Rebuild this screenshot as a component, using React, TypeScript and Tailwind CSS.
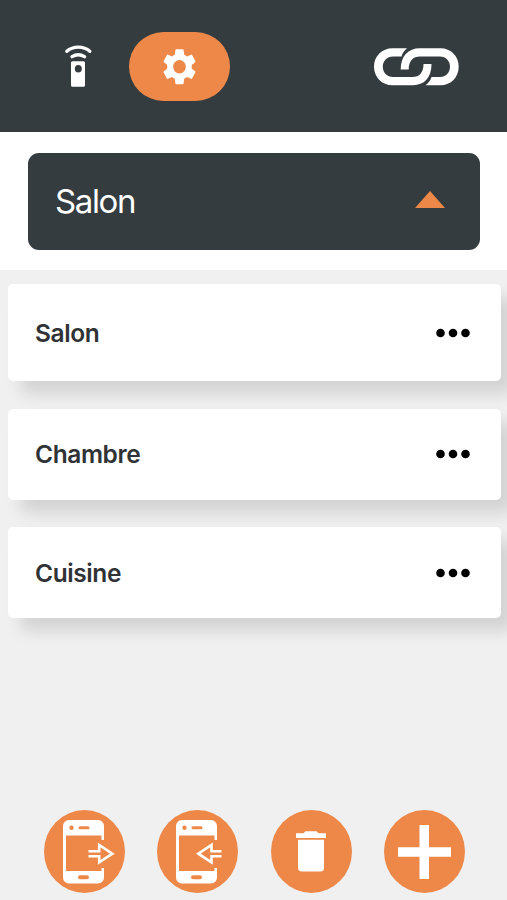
import { useState } from 'react'

const rooms = [
  { name: 'Salon', height: 'h-[97px]' },
  { name: 'Chambre', height: 'h-[91px]' },
  { name: 'Cuisine', height: 'h-[91px]' },
]

function RemoteIcon() {
  return (
    <svg width="30" height="44" viewBox="0 0 30 44" fill="none">
      <path
        fill="#fff"
        fillRule="evenodd"
        d="M9.5 17.3h11a1.500 1.500 0 0 1 1.500 1.500v22.500a1.500 1.500 0 0 1-1.500 1.500h-11a1.500 1.500 0 0 1-1.500-1.500V18.800a1.500 1.500 0 0 1 1.500-1.500zM15.300 21a3.500 3.800 0 1 0 0 7.600a3.500 3.800 0 1 0 0-7.600z"
      />
      <path d="M9 12.700Q15.300 8.800 21.600 12.700" stroke="#fff" strokeWidth="3.300" strokeLinecap="round" />
      <path d="M3.800 7.300C10 1.800 20.600 1.800 26.800 7.300" stroke="#fff" strokeWidth="3.300" strokeLinecap="round" />
    </svg>
  )
}

function GearIcon() {
  return (
    <svg width="41" height="43.500" viewBox="0 0 24 24" preserveAspectRatio="none" fill="#fff">
      <path d="M19.14 12.94c.04-.3.06-.61.06-.94 0-.32-.02-.64-.07-.94l2.03-1.58a.49.49 0 0 0 .12-.61l-1.92-3.32a.488.488 0 0 0-.59-.22l-2.39.96c-.5-.38-1.03-.7-1.62-.94l-.36-2.54a.484.484 0 0 0-.48-.41h-3.84c-.24 0-.43.17-.47.41l-.36 2.54c-.59.24-1.13.57-1.62.94l-2.39-.96c-.22-.08-.47 0-.59.22L2.74 8.87c-.12.21-.08.47.12.61l2.03 1.58c-.05.3-.09.63-.09.94s.02.64.07.94l-2.03 1.58a.49.49 0 0 0-.12.61l1.92 3.32c.12.22.37.29.59.22l2.39-.96c.5.38 1.03.7 1.62.94l.36 2.54c.05.24.24.41.48.41h3.84c.24 0 .44-.17.47-.41l.36-2.54c.59-.24 1.13-.56 1.62-.94l2.39.96c.22.08.47 0 .59-.22l1.92-3.32c.12-.22.07-.47-.12-.61l-2.01-1.58zM12 15.7c-2.040 0-3.700-1.660-3.700-3.700s1.660-3.700 3.700-3.700 3.700 1.660 3.700 3.700-1.660 3.700-3.700 3.700z" />
    </svg>
  )
}

function LinkIcon() {
  return (
    <svg width="85" height="38" viewBox="0 0 85 38" fill="#fff">
      <path d="M33 .300H18.500C8 .300 0 8.200 0 18.700s8 18.500 18.500 18.500H39C50 37.200 57.500 30 57.500 16H49.500C49.500 24.500 45.500 29 38.500 29H19C13 29 8.800 24.500 8.800 18.700S13 8.500 19 8.500H27.500C28.500 5 30.500 2.500 33 .300z" />
      <path d="M51.500 37.200H66.500C77 37.200 84.700 29.200 84.700 18.700S77 .300 66.500 .300H45.500C34.500 .300 26.700 8 26.700 21.500H34.700C34.700 13 39 8.500 46 8.500H66C72 8.500 76 13 76 18.700S72 29 66 29H57.500C56.500 32.500 54.500 35 51.500 37.200z" />
    </svg>
  )
}

function PhoneIcon({ incoming = false }: { incoming?: boolean }) {
  return (
    <svg width="52" height="64" viewBox="0 0 52 64" fill="none">
      <path
        fill="#fff"
        fillRule="evenodd"
        d="M6 0h29a6 6 0 0 1 6 6v14h-2.500V15.500H3V51H38.500V48h2.500V57.500a6 6 0 0 1-6 6H6a6 6 0 0 1-6-6V6a6 6 0 0 1 6-6zM8.500 5.500a2.200 2.200 0 1 0 0 4.400a2.200 2.200 0 1 0 0-4.400zM17 6.200h8a1.500 1.500 0 0 1 0 3H17a1.500 1.500 0 0 1 0-3zM17 55.200h7a2 2 0 0 1 0 4H17a2 2 0 0 1 0-4z"
      />
      {incoming ? (
        <path d="M45.500 31.200H35.500V25L22.300 33.700L35.500 42.400V36.200H45.500" stroke="#fff" strokeWidth="2.600" />
      ) : (
        <path d="M25.500 31.200H36.200V25L49.300 33.700L36.200 42.400V36.200H25.500" stroke="#fff" strokeWidth="2.600" />
      )}
    </svg>
  )
}

function TrashIcon() {
  return (
    <svg width="30" height="41" viewBox="0 0 30 41" fill="#fff">
      <path d="M0 2.300H7.500L9.500 .2H20.500L22.500 2.300H30V7H0z" />
      <path d="M2 8.700H28V37a3.500 3.500 0 0 1-3.500 3.500H6A4 4 0 0 1 2 36.500z" />
    </svg>
  )
}

function PlusIcon() {
  return (
    <svg width="53" height="54" viewBox="0 0 53 54" fill="#fff">
      <path d="M21.500 0h9.500v22.300h22v9.400H31V54h-9.500V31.700H0v-9.400h21.500z" />
    </svg>
  )
}

export default function App() {
  const [selected, setSelected] = useState('Salon')
  const actionClass = 'flex h-[83px] w-[81px] items-center justify-center rounded-[50%] bg-[#ed8849]'

  return (
    <div className="flex h-[900px] w-[507px] flex-col overflow-hidden bg-[#f0f0f0] font-['Inter','Liberation_Sans',sans-serif]">
      <header className="flex h-[132px] shrink-0 items-start bg-[#353c3f] pt-8 pl-[63px]">
        <button className="mt-3">
          <RemoteIcon />
        </button>
        <button className="ml-9 flex h-[69px] w-[101px] items-center justify-center rounded-full bg-[#ed8849]">
          <GearIcon />
        </button>
        <button className="mt-4 ml-[144px]">
          <LinkIcon />
        </button>
      </header>

      <div className="h-[138px] shrink-0 bg-white px-7 pt-[21px]">
        <button className="flex h-[97px] w-[452px] items-center justify-between rounded-[11px] bg-[#353c3f] pr-[35px] pl-[27px]">
          <span className="text-[33px] leading-none tracking-[-1.400px] text-white">{selected}</span>
          <svg width="30" height="17" viewBox="0 0 30 17" className="-mt-1">
            <path d="M15 0L30 17H0z" fill="#ed8849" />
          </svg>
        </button>
      </div>

      <main className="flex flex-1 flex-col gap-[27.500px] pt-[14.400px] pl-2">
        {rooms.map((room) => (
          <div
            key={room.name}
            onClick={() => setSelected(room.name)}
            className={`flex w-[492.500px] shrink-0 items-center justify-between rounded-[5px] bg-white pr-[31px] pl-[27px] shadow-[13px_13px_16px_rgba(0,0,0,0.12)] ${room.height}`}
          >
            <span className="text-[24.500px] leading-none font-semibold tracking-[-0.400px] text-[#303335]">{room.name}</span>
            <svg width="34" height="10" viewBox="0 0 34 10">
              <circle cx="4.500" cy="5" r="4.300" />
              <circle cx="17" cy="5" r="4.300" />
              <circle cx="29.500" cy="5" r="4.300" />
            </svg>
          </div>
        ))}
      </main>

      <footer className="flex h-[90px] shrink-0 items-start gap-x-[32.300px] pl-11">
        <button className={actionClass}>
          <span className="ml-2">
            <PhoneIcon />
          </span>
        </button>
        <button className={actionClass}>
          <span className="ml-[9px]">
            <PhoneIcon incoming />
          </span>
        </button>
        <button className={actionClass}>
          <TrashIcon />
        </button>
        <button className={actionClass}>
          <PlusIcon />
        </button>
      </footer>
    </div>
  )
}
